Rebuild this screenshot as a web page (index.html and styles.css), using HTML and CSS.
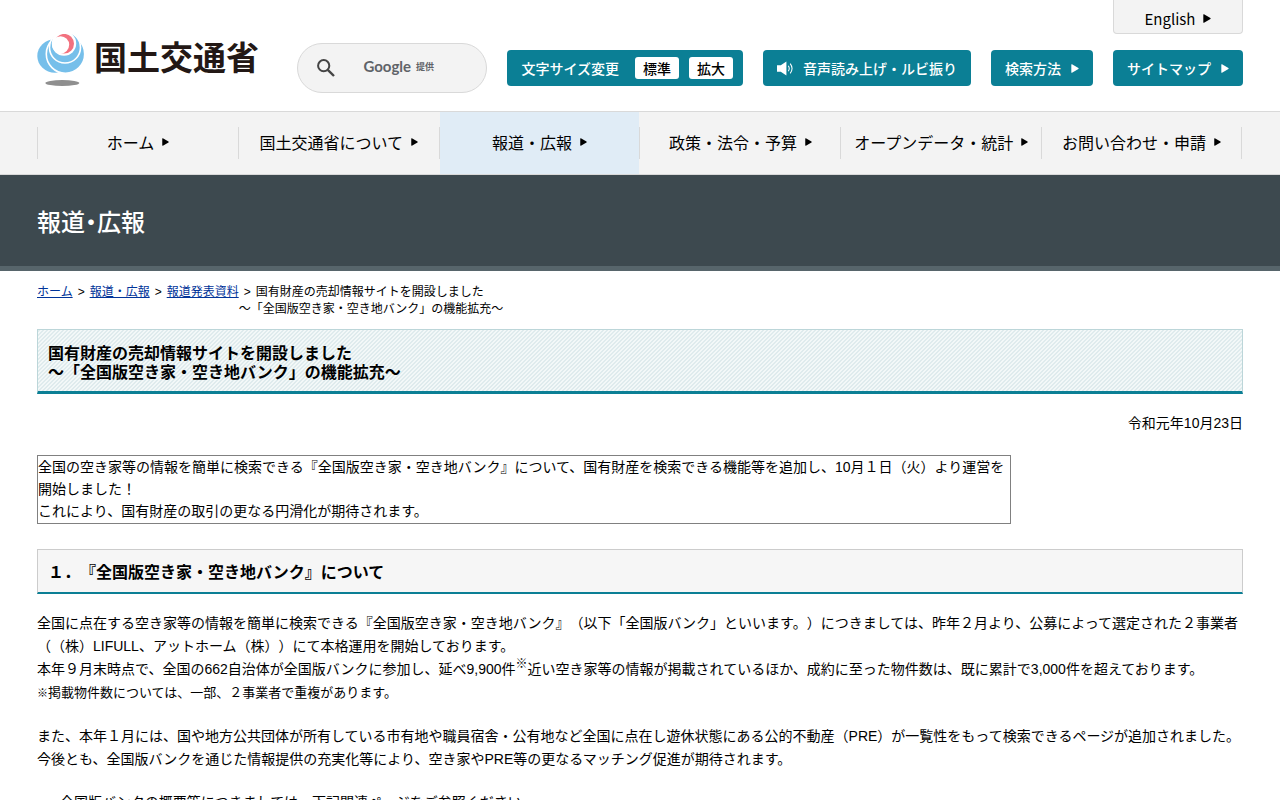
FILE: index.html
```html
<!DOCTYPE html>
<html lang="ja">
<head>
    <meta charset="UTF-8">
    <meta name="viewport" content="width=device-width, initial-scale=1.0">
    <title>報道・広報：国有財産の売却情報サイトを開設しました - 国土交通省</title>
    <link rel="stylesheet" href="styles.css">
</head>
<body>
    <svg width="0" height="0" class="symbols" aria-hidden="true">
        <symbol id="arrow" viewBox="0 0 8 9">
            <path d="M1 0.3 L7.4 3.9 Q8 4.5 7.4 5.1 L1 8.7 Q0.3 8.9 0.3 8.2 V0.8 Q0.3 0.1 1 0.3 Z" fill="currentColor"/>
        </symbol>
    </svg>

    <header class="header">
        <a href="#" class="logo">
            <svg class="logo-mark" viewBox="0 0 48 52" aria-hidden="true">
                <ellipse cx="25.3" cy="49" rx="17" ry="3" fill="#8f8f8f"/>
                <ellipse cx="18" cy="22" rx="17.7" ry="16.7" fill="#76bfea"/>
                <circle cx="28.5" cy="20" r="19.2" fill="#76bfea" stroke="#fff" stroke-width="1.6"/>
                <circle cx="28" cy="13.5" r="15.5" fill="#76bfea" stroke="#fff" stroke-width="1.6"/>
                <circle cx="27" cy="9.5" r="12.2" fill="#fff"/>
                <circle cx="27.2" cy="9.7" r="9.8" fill="#f2727f"/>
                <circle cx="23.6" cy="10.8" r="8.6" fill="#fff"/>
            </svg>
            <span class="logo-text">国土交通省</span>
        </a>

        <div class="header-right">
            <a href="#" class="english">English <svg class="arrow"><use href="#arrow"/></svg></a>
            <div class="tools">
                <form class="search">
                    <button type="submit" class="search-btn" aria-label="検索">
                        <svg viewBox="0 0 18 18" width="18" height="18" fill="none" stroke="#444" stroke-width="2">
                            <circle cx="6.7" cy="6.7" r="5.6"/>
                            <path d="M10.8 10.8 L17 17" stroke-width="2.4"/>
                        </svg>
                    </button>
                    <label for="q" class="search-label">Google <small>提供</small></label>
                    <input type="text" id="q" class="search-input">
                </form>
                <div class="tool size-tool">
                    <span class="size-label">文字サイズ変更</span>
                    <button type="button" class="size-btn">標準</button>
                    <button type="button" class="size-btn">拡大</button>
                </div>
                <a href="#" class="tool">
                    <svg class="speaker" viewBox="0 0 17 15" aria-hidden="true">
                        <path d="M0 4 H4 L10 0 V15 L4 11 H0 Z" fill="#fff"/>
                        <path d="M12 4.5 Q14 7.5 12 10.5 M14 2.3 Q18 7.5 14 12.7" fill="none" stroke="#fff" stroke-width="1.1"/>
                    </svg>
                    音声読み上げ・ルビ振り
                </a>
                <a href="#" class="tool">検索方法 <svg class="arrow"><use href="#arrow"/></svg></a>
                <a href="#" class="tool">サイトマップ <svg class="arrow"><use href="#arrow"/></svg></a>
            </div>
        </div>
    </header>

    <nav class="nav">
        <ul class="nav-list">
            <li><a href="#">ホーム <svg class="arrow"><use href="#arrow"/></svg></a></li>
            <li><a href="#">国土交通省について <svg class="arrow"><use href="#arrow"/></svg></a></li>
            <li><a href="#" class="active">報道・広報 <svg class="arrow"><use href="#arrow"/></svg></a></li>
            <li><a href="#">政策・法令・予算 <svg class="arrow"><use href="#arrow"/></svg></a></li>
            <li><a href="#">オープンデータ・統計 <svg class="arrow"><use href="#arrow"/></svg></a></li>
            <li><a href="#">お問い合わせ・申請 <svg class="arrow"><use href="#arrow"/></svg></a></li>
        </ul>
    </nav>

    <div class="category">報道・広報</div>

    <main class="container">
        <ul class="breadcrumb">
            <li><a href="#">ホーム</a></li>
            <li><a href="#">報道・広報</a></li>
            <li><a href="#">報道発表資料</a></li>
            <li>国有財産の売却情報サイトを開設しました<br>～「全国版空き家・空き地バンク」の機能拡充～</li>
        </ul>

        <h1 class="title">国有財産の売却情報サイトを開設しました<br>～「全国版空き家・空き地バンク」の機能拡充～</h1>

        <p class="date">令和元年10月23日</p>

        <div class="summary">
            全国の空き家等の情報を簡単に検索できる『全国版空き家・空き地バンク』について、国有財産を検索できる機能等を追加し、10月１日（火）より運営を開始しました！<br>
            これにより、国有財産の取引の更なる円滑化が期待されます。
        </div>

        <h2 class="section-title">１．『全国版空き家・空き地バンク』について</h2>

        <p class="text">全国に点在する空き家等の情報を簡単に検索できる『全国版空き家・空き地バンク』（以下「全国版バンク」といいます。）につきましては、昨年２月より、公募によって選定された２事業者（（株）LIFULL、アットホーム（株））にて本格運用を開始しております。<br>
        本年９月末時点で、全国の662自治体が全国版バンクに参加し、延べ9,900件<sup>※</sup>近い空き家等の情報が掲載されているほか、成約に至った物件数は、既に累計で3,000件を超えております。<br>
        <span class="note"><small>※</small>掲載物件数については、一部、２事業者で重複があります。</span></p>

        <p class="text">また、本年１月には、国や地方公共団体が所有している市有地や職員宿舎・公有地など全国に点在し遊休状態にある公的不動産（PRE）が一覧性をもって検索できるページが追加されました。<br>
        今後とも、全国版バンクを通じた情報提供の充実化等により、空き家やPRE等の更なるマッチング促進が期待されます。</p>

        <p class="text indent">全国版バンクの概要等につきましては、下記関連ページをご参照ください。</p>
    </main>
</body>
</html>
```

FILE: styles.css
```css
* {
    margin: 0;
    padding: 0;
    box-sizing: border-box;
}

body {
    font-family: "Liberation Sans", "Noto Sans CJK JP", sans-serif;
    font-size: 14px;
    line-height: 23px;
    text-spacing-trim: space-all;
    color: #000;
    background-color: #fff;
}

ul {
    list-style: none;
}

.symbols {
    display: none;
}

.arrow {
    width: 8px;
    height: 9px;
    flex: none;
}

/* header */
.header {
    display: flex;
    justify-content: space-between;
    padding: 0 37px;
    font-family: "Noto Sans CJK JP", sans-serif;
}

.logo {
    display: flex;
    gap: 9px;
    padding-top: 34px;
    color: #231815;
    text-decoration: none;
    white-space: nowrap;
}

.logo-mark {
    width: 48px;
    height: 52px;
}

.logo-text {
    font-size: 33px;
    font-weight: bold;
    line-height: 44px;
}

.header-right {
    display: flex;
    flex-direction: column;
    align-items: flex-end;
    padding-bottom: 18px;
}

.english {
    display: flex;
    align-items: center;
    justify-content: center;
    gap: 8px;
    width: 130px;
    height: 34px;
    padding-top: 3px;
    border: 1px solid #d9d9d9;
    border-top: 0;
    border-radius: 0 0 4px 4px;
    background-color: #f3f3f3;
    font-size: 15px;
    color: #000;
    text-decoration: none;
}

.tools {
    display: flex;
    align-items: center;
    gap: 20px;
    margin-top: 9px;
}

.search {
    position: relative;
    display: flex;
    align-items: center;
    width: 190px;
    height: 50px;
    padding-left: 18px;
    border: 1px solid #d9d9d9;
    border-radius: 25px;
    background-color: #f3f3f3;
}

.search-btn {
    width: 20px;
    height: 18px;
    border: 0;
    background: none;
    cursor: pointer;
}

.search-label {
    display: flex;
    align-items: center;
    gap: 5px;
    margin-left: 27px;
    padding-bottom: 3px;
    font-family: Lato, "Noto Sans CJK JP", sans-serif;
    font-size: 15px;
    font-weight: bold;
    color: #5f6368;
}

.search-label small {
    font-family: "Noto Sans CJK JP", sans-serif;
    font-size: 9px;
}

/* the box lies over its label text */
.search-input {
    position: absolute;
    top: 8px;
    right: 16px;
    width: 120px;
    height: 32px;
    border: 0;
    background: transparent;
    outline: none;
}

.tool {
    display: flex;
    align-items: center;
    gap: 10px;
    height: 36px;
    padding: 0 14px;
    border-radius: 4px;
    background-color: #0b7f95;
    font-size: 14px;
    font-weight: 500;
    color: #fff;
    text-decoration: none;
    white-space: nowrap;
}

.size-tool {
    padding-right: 10px;
}

.size-label {
    margin-right: 6px;
}

.size-btn {
    width: 44px;
    height: 22px;
    border: 0;
    border-radius: 3px;
    background-color: #fff;
    font-family: inherit;
    font-size: 14px;
    font-weight: 500;
    line-height: 22px;
    color: #000;
    cursor: pointer;
}

.speaker {
    width: 16px;
    height: 15px;
}

/* global navigation */
.nav {
    padding: 0 38px 0 37px;
    border-top: 1px solid #d9d9d9;
    border-bottom: 1px solid #d9d9d9;
    background-color: #f3f3f3;
    font-family: "Noto Sans CJK JP", sans-serif;
    font-size: 16px;
}

.nav-list {
    display: flex;
}

.nav-list li {
    display: flex;
    flex: 1 1 0;
    align-items: center;
}

.nav-list li::before,
.nav-list li:last-child::after {
    content: "";
    width: 1px;
    height: 32px;
    background-color: #d9d9d9;
}

.nav-list a {
    display: flex;
    flex: 1;
    align-items: center;
    justify-content: center;
    gap: 8px;
    height: 62px;
    padding-bottom: 2px;
    color: #000;
    text-decoration: none;
    white-space: nowrap;
}

.nav-list .arrow {
    width: 7px;
    height: 8px;
}

.nav-list a.active,
.nav-list a:hover {
    background-color: #e0ecf6;
}

.category {
    padding: 30px 37px 29px;
    border-bottom: 5px solid #57656b;
    background-color: #3d494f;
    font-family: "Noto Sans CJK JP", sans-serif;
    font-size: 24px;
    font-weight: 500;
    line-height: 32px;
    font-feature-settings: "halt";
    color: #fff;
}

/* contents */
.container {
    padding: 13px 37px 40px;
}

.breadcrumb {
    display: flex;
    margin-bottom: 11px;
    font-size: 12px;
    line-height: 17px;
}

.breadcrumb li + li::before {
    content: ">";
    margin: 0 5px;
}

.breadcrumb a {
    color: #003399;
}

.title {
    padding: 14px 10px 9px;
    border: 1px solid #bcd6d9;
    border-bottom: 3px solid #0b7f95;
    background-image: linear-gradient(135deg, #dfebed 25%, #f3f8f8 25% 50%, #dfebed 50% 75%, #f3f8f8 75%);
    background-size: 4px 4px;
    font-size: 16px;
    line-height: 19px;
}

.date {
    margin: 18px 0 20px;
    text-align: right;
}

.summary {
    width: 974px;
    max-width: 100%;
    padding-bottom: 1px;
    border: 1px solid #808080;
    line-height: 22px;
}

.section-title {
    margin: 25px 0 18px;
    padding: 11px 10px 8px;
    border: 1px solid #ccc;
    border-bottom: 2px solid #0b7f95;
    background-color: #f6f6f6;
    font-size: 16px;
    line-height: 23px;
}

.text {
    margin-bottom: 20px;
}

.text sup {
    font-size: 12px;
    line-height: 12px;
}

.note {
    font-size: 13px;
}

.note small {
    font-size: 11px;
}

.indent {
    padding-left: 23px;
}
```
